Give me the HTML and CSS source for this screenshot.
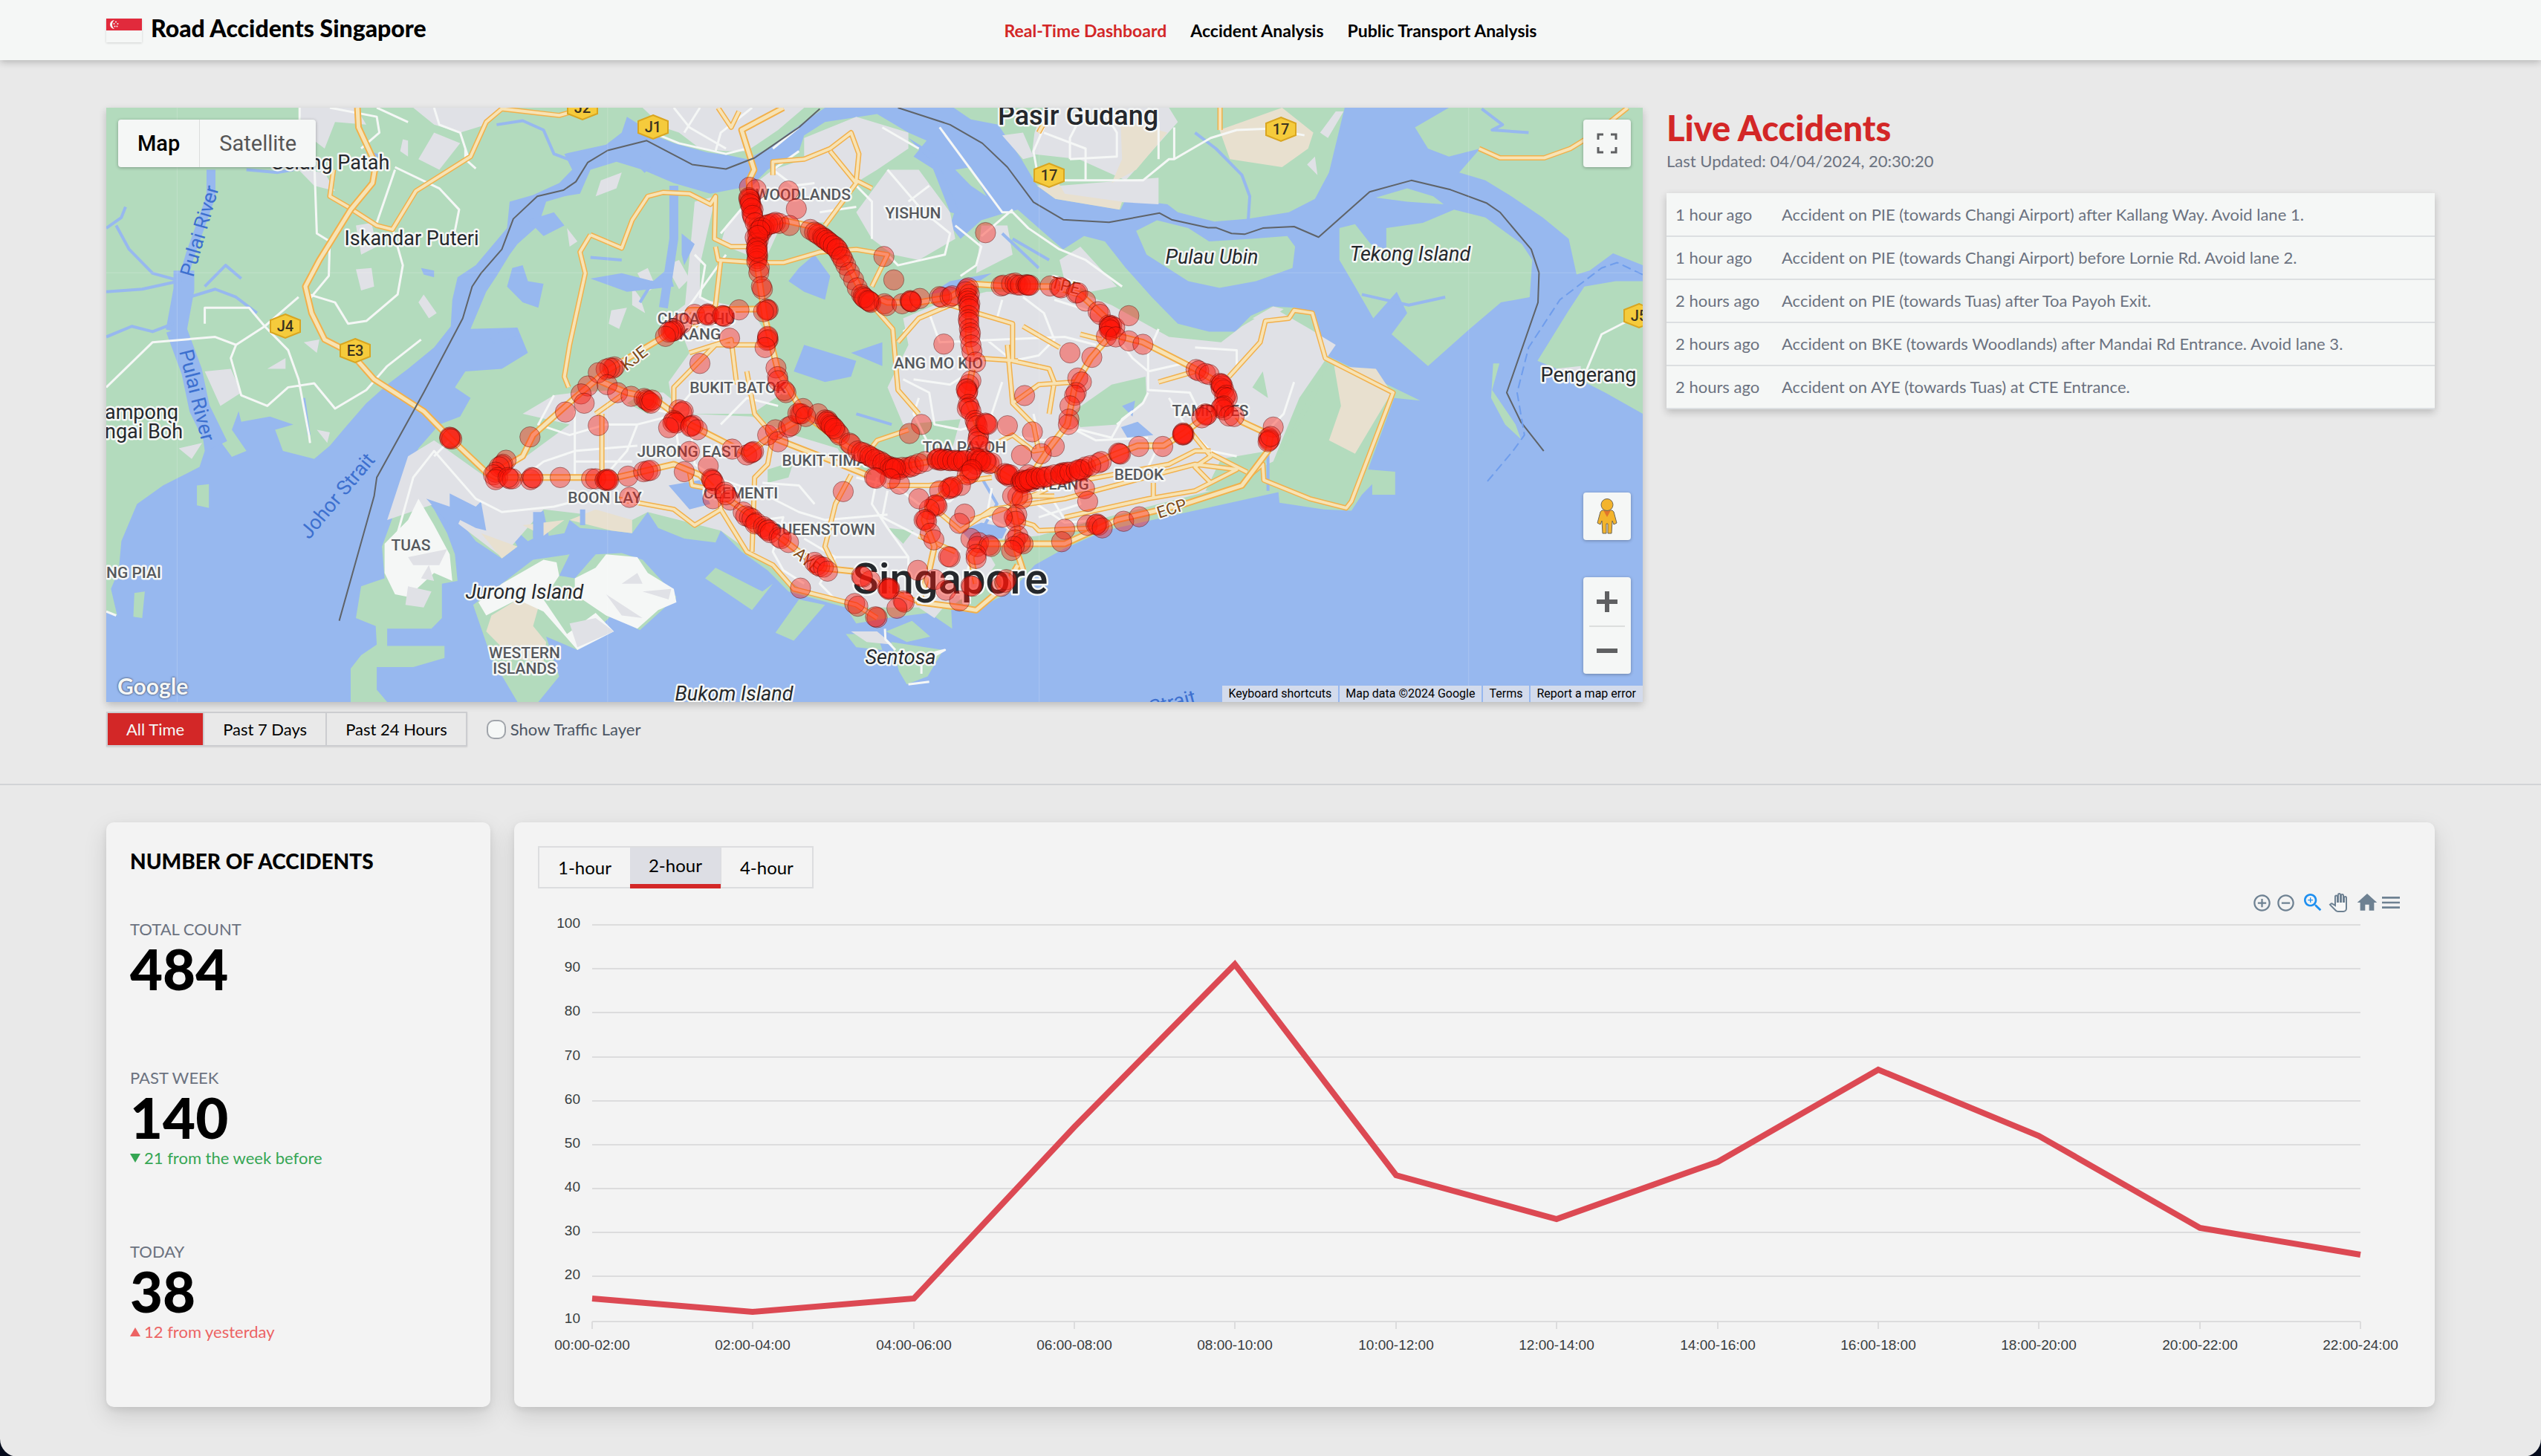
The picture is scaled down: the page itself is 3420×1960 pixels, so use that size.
FILE: index.html
```html
<!DOCTYPE html>
<html lang="en">
<head>
<meta charset="utf-8">
<title>Road Accidents Singapore</title>
<link rel="stylesheet" href="styles.css">
</head>
<body>
<div class="page">
<header class="topbar">
  <a class="brand" href="#">
    <svg class="flag" viewBox="0 0 48 32" aria-hidden="true"><rect width="48" height="32" fill="#f5f7f6"/><rect width="48" height="16" fill="#e12a3c"/><path d="M11 2a6 6 0 1 0 0 12a7.500 7.500 0 0 1 0-12z" fill="#f5f7f6"/><g fill="#f5f7f6"><circle cx="13" cy="4.500" r="1"/><circle cx="10.500" cy="7" r="1"/><circle cx="15.500" cy="7" r="1"/><circle cx="11.500" cy="10.500" r="1"/><circle cx="14.500" cy="10.500" r="1"/></g></svg>
    <span>Road Accidents Singapore</span>
  </a>
  <nav class="nav">
    <a class="current" href="#">Real-Time Dashboard</a>
    <a href="#">Accident Analysis</a>
    <a href="#">Public Transport Analysis</a>
  </nav>
</header>

<main>
<section class="live">
  <div class="map-column">
    <div class="map">
      <svg class="map-canvas" viewBox="0 0 2068 800" preserveAspectRatio="xMidYMid slice" role="img" aria-label="Map of accidents in Singapore">
        <defs>
          <marker id="dot" markerUnits="userSpaceOnUse" markerWidth="60" markerHeight="100" refX="0" refY="0" viewBox="-30 -50 60 100" overflow="visible"><ellipse rx="19.500" ry="38.500" fill="#ff1408" fill-opacity=".4" stroke="#400404" stroke-opacity=".75" stroke-width="1" vector-effect="non-scaling-stroke"/></marker>
          <path id="shield" d="M0-16L20-8V8L0 16L-20 8V-8z" fill="#f5cb3c" stroke="#d9a520" stroke-width="2"/>
        </defs>
        <rect width="2068" height="800" fill="#97b8ef"/>
        <g class="terrain" transform="scale(.7015 .3571) translate(-61 -406)">
          <g class="green">
            <path d="M61 406H1440L1385 480 1330 560 1290 600 1255 585 1215 575 1150 540 1125 520 1060 440 1050 500 1020 545 940 580 955 640 930 690 880 735 835 760 830 860 800 930 770 1000 735 1045 725 1130 722 1230 690 1310 640 1390 600 1450 560 1520 520 1610 490 1680 460 1730 400 1700 385 1620 420 1600 375 1570 320 1590 315 1550 302 1620 330 1700 302 1722 260 1610 240 1560 250 1700 240 1760 170 1830 120 1900 90 2040 85 2150 70 2220 82 2320 61 2305z"/>
            <path d="M1300 700L1330 640 1390 570 1400 510 1440 460 1540 430 1600 500 1635 530 1610 590 1650 640 1665 720 1690 790 1680 850 1700 900 1740 830 1790 800 1810 790 1850 860 1897 940 1937 890 1977 910 2017 1010 2067 1120 2117 1220 2177 1250 2227 1250 2257 1190 2297 1155 2342 1160 2377 1180 2402 1340 2530 1460 2582 1510 2532 1500 2482 1770 2534 1778 2534 1865 2490 1865 2490 1825 2470 1865 2450 1925 2397 1920 2312 1895 2310 1855 2137 1930 1977 2000 1897 2070 1842 2130 1797 2230 1722 2305 1682 2290 1684 2370 1640 2310 1560 2330 1500 2350 1480 2290 1370 2230 1330 2150 1280 2080 1240 2000 1230 2045 1170 2030 1120 1990 1100 1930 1070 2010 1030 2000 970 1990 950 1960 940 2010 910 2020 900 1925 880 1930 880 2030 870 2040 820 1950 850 2060 820 2105 770 2040 730 1940 740 1850 705 1900 680 1860 670 1870 690 1920 715 2010 730 2090 735 2190 705 2200V2330L685 2370H600V2435H710V2480L650 2515H580V2600L600 2646H530V2520L550 2470 580 2430 578 2360 540 2330 550 2210 595 2180 590 2060 620 1900 640 1770 660 1690 700 1600 740 1570 760 1500 730 1460 750 1400 820 1390 870 1330 850 1235 760 1240 790 1100 810 1040 835 960 850 920 890 850 905 760 940 740 970 730 990 640 1040 610 1090 640 1150 690 1220 730z"/>
            <path d="M1687 406H2437L2407 650 2380 750 2330 800 2252 825 2187 835 2117 800 2097 770 2017 750 2007 790 1882 750 1847 700 1817 600 1772 470 1720 450z"/>
            <path d="M2637 406L2607 440 2572 480 2597 560 2637 590 2697 560 2657 650 2707 680 2757 740 2817 820 2867 900 2882 1035 2907 1020 2952 955 3009 1000V406z"/>
            <path d="M3009 1060L2957 1060 2897 1080 2867 1170 2807 1360 2857 1400 2937 1480 3009 1560z"/>
            <path d="M2427 860L2457 845 2487 920 2517 940V860L2587 840 2647 790 2707 820 2777 920 2797 980 2792 1120 2737 1140 2677 1240 2597 1380 2527 1260 2557 1180 2537 1100 2492 1200 2457 1080 2427 980zM2497 745L2557 710 2607 740 2627 770 2557 760z"/>
            <path d="M2037 870L2077 830 2137 860 2177 910 2257 900 2327 890 2342 930 2337 1010 2267 1060 2197 1085 2137 1060 2057 960z"/>
            <path d="M1557 2380L1607 2340 1642 2400 1597 2420zM1567 2420L1667 2450 1637 2550 1597 2580 1582 2530z"/>
            <path d="M2722 1370h12L2720 1470 2765 1600 2775 1655 2745 1600 2718 1500z"/>
            <path d="M820 2200L880 2110 950 2090 930 2170 960 2180 1000 2090 1050 2085 1090 2110 1155 2250 1085 2375 1030 2320 965 2450 905 2400 930 2550 890 2646H850L800 2480 765 2280z"/>
            <path d="M1230 2140L1320 2230 1340 2200 1300 2300 1210 2180zM1390 2260L1440 2280 1380 2415 1345 2385zM235 1830L258 1825V1915L235 1905zM115 2235L135 2230 130 2330 113 2325zM1690 640L1720 630 1750 740 1720 700zM1480 2390L1540 2390 1550 2450 1500 2440z"/>
          </g>
          <g class="urban">
            <path d="M1090 406H1400L1350 490 1290 570 1250 570 1200 560 1160 500 1130 480zM650 406H820L790 470 740 500 690 470zM690 500L740 540 700 640 660 600zM540 850L570 840 580 930 550 960zM540 1015L570 1010 575 1080 550 1095zM670 1110L695 1180 680 1200 660 1140zM430 406H540L560 470 500 460 480 560 440 500zM430 640L480 650 500 720 460 700zM945 860L965 910 950 930zM1010 680L1050 650 1040 710 1000 740zM370 1390L405 1350V1390zM440 1290L470 1280 465 1330zM200 1690L245 1670 225 1730zM465 1620L490 1630 485 1670zM250 1400L300 1390 320 1480 280 1530zM630 525L640 530V590L625 570z"/>
            <path d="M640 1720L690 1660 790 1800 860 1730 950 1600 860 1560 920 1490 960 1480 1040 1470 1130 1480 1180 1560 1300 1570 1380 1640 1480 1700 1560 1790 1680 1720 1700 1580 1590 1600 1560 1460 1600 1300 1590 1200 1650 1150 1750 1100 1800 1100 1900 1080 1990 1150 2100 1270 2200 1290 2240 1230 2300 1160 2370 1240 2420 1300 2350 1500 2300 1740 2180 1850 1940 1970 1850 2020 1790 2070 1740 2200 1680 2290 1500 2290 1400 2230 1240 2000 1100 1930 1070 1960 900 1920 820 2100 740 1980 690 1900 600 1960z"/>
            <path d="M1150 1180L1190 1120 1300 1170 1340 1300 1360 1480 1300 1560 1150 1560 1140 1440 1180 1330zM1290 760L1250 850 1240 920 1290 960 1330 960 1360 830 1450 840 1490 700 1540 640 1600 560V500L1500 440 1400 520V600L1340 640 1300 700zM1560 640L1620 640 1680 800 1690 900 1620 980 1570 960 1530 900 1500 800zM1190 760L1230 740 1200 1000V1150L1170 1180zM1740 850L1790 850 1800 960 1730 1030zM1890 980L1930 930 2000 1080 1950 1100 1900 1060z"/>
            <path d="M1860 406H2100L2117 460 2017 680 1927 600 1837 580 1842 500zM1890 700L2080 670V770L1900 750zM2390 500L2420 420H2435L2405 520zM2250 530L2290 500 2290 570zM2365 620L2380 590 2385 660zM1780 510L1820 500 1840 590 1820 600z"/>
            <path d="M1490 2380L1540 2380 1570 2430 1520 2420zM2260 1200L2300 1155 2320 1165 2290 1210zM2840 1390L2890 1380 2890 1410zM1620 2290L1680 2260 1650 2330zM1080 1030L1100 1010 1115 1080 1100 1100zM1135 1000L1160 980 1180 1050 1160 1090zM1070 1080L1085 1120 1095 1180 1070 1150zM1030 1170L1060 1160 1045 1240 1025 1220z"/>
          </g>
          <g class="sand">
            <path d="M2197 490L2317 406 2377 500 2367 560 2317 630 2217 600zM2007 450L2097 500 2037 640 1990 690 2010 600zM1847 700L1887 685 1900 730 2010 760 2005 790 1882 750zM2417 1380L2497 1390 2527 1480 2457 1710 2407 1660 2430 1530zM950 1960L1000 1920 1070 1960V2010L1030 2000zM860 1980L940 1960 900 2020zM780 2010L850 2060 820 2105zM800 2320L850 2260 890 2290 880 2360 905 2420 900 2500 840 2480 790 2380z"/>
          </g>
          <g class="green">
            <path d="M1990 1450L2055 1420 2057 1500 2000 1600 1930 1610 1910 1560zM1450 1640L1500 1660 1530 1790 1490 1780zM1330 1770L1380 1740 1370 1800 1330 1820zM1560 1990L1610 2000 1590 2050zM2170 1850L2200 1730 2290 1700 2280 1850zM2260 1460L2280 1400 2290 1500zM2380 1500L2410 1340 2300 1760zM1740 2040L1850 2020 1860 2090 1797 2230zM1100 1470L1130 1500 1100 1560 1060 1520z"/>
          </g>
          <g class="white">
            <path d="M660 1880L690 1980 720 2090 725 2190 690 2160 640 2250 615 2240 595 2160V2050L640 1960zM820 2200L900 2110 925 2120 930 2170 900 2260 945 2390 1000 2310 1035 2380 965 2450 900 2305 850 2260 790 2320 775 2270zM1000 2140L1020 2090 1080 2100 1100 2160 1150 2220 1155 2270 1120 2300 1080 2370 1020 2320 960 2240V2180z"/>
          </g>
          <g class="urban">
            <path d="M640 2100L715 2070 700 2130 650 2130zM680 2130L690 2190 665 2180zM640 2210L685 2230 670 2290 635 2280zM1050 2200L1080 2160 1090 2200zM1090 2230L1145 2220 1140 2260zM1020 2240L1090 2330 1050 2320zM950 2350L1000 2330 1035 2380 965 2440z"/>
          </g>
          <g class="water">
            <path d="M840 1010L860 1000 870 1060 900 1070 890 1160 860 1140 830 1080zM870 830L920 800 940 850 900 890zM1390 1010L1420 960 1450 1040 1440 1130 1400 1100 1370 1060zM1400 1300L1500 1360 1490 1420 1440 1440 1380 1400zM1490 1330L1550 1290 1550 1380zM1600 520L1640 600 1680 800 1700 810 1650 580zM2008 1610L2040 1590 2070 1640 2020 1650zM2010 1530L2035 1510 2030 1570zM1640 1110L1680 1060 1760 1030 1720 1080zM990 1050L1050 1030 1110 1060 1140 1010 1150 1080 1060 1100zM1165 880L1190 920 1170 1000 1165 960zM665 1010l25 10v25l-20-10z"/>
            <path d="M675 1880L720 1910 720 1860 770 1910 780 1890 790 2000 770 1990 740 1960 730 2000zM880 1930h20v95h-20zM970 1920h10v60h-10zM1140 1830L1200 1810 1220 1900 1180 1920zM1700 2000L1740 1970 1790 1990 1780 2030 1720 2040z"/>
          </g>
          <g class="river">
            <path class="river-wide" d="M195 1250L210 1090V1020M195 1240L225 1400 240 1540 275 1680"/>
            <path class="river-mid" d="M210 1040L222 960 262 740V640M1130 1160L1150 900 1150 700M1100 640L1080 600M800 1280L850 1250"/>
            <path d="M61 860L90 820 98 780M205 1060L150 1030 105 940 80 850M61 1100L130 1090 200 1060M61 1270L110 1230 150 1250 190 1220M330 640L390 650 420 640M810 470L860 455 900 490 920 580 960 610M250 1080L290 1000 320 1050M220 1120L270 1090 310 1120 350 1180M990 970L1050 980M1085 1140L1110 1060M2150 500L2190 560 2240 660 2255 740 2252 830M2700 410L2740 470 2720 490 2790 500M1780 880L1850 1010M1800 900L1870 980M2470 1110L2560 1150 2630 1120M2290 1700V1850M1740 1800L1770 1900 1740 2000M440 1500L450 1640M1500 1560L1568 1600M560 570L600 600"/>
          </g>
          <g class="minor">
            <path d="M432 406V560L460 600 465 880 490 910M580 406L640 460M750 560L755 590M490 406L580 440 585 500 550 560M690 406L700 470 740 500 750 560 750 600 770 635M615 630L700 710 738 790 730 870M615 640L580 840M610 860L630 1000 620 1110 560 1210 525 1220 500 1140 450 1110M490 900L488 1040 450 1130M61 1460L150 1290 270 1270 310 1300M310 1300L365 1230 430 1120M250 1220V1160H335L365 1230 410 1320 430 1430 450 1640 452 1670M310 1300L300 1350 320 1490 370 1530 410 1460 460 1445 500 1540 560 1470 600 1380 665 1280"/>
            <path d="M1110 500L1160 540 1250 580 1290 560M1150 406L1180 480 1250 560M1200 406L1170 500M1300 406L1240 500 1230 570M1390 480L1340 560M1660 480L1780 800 1800 800 1830 860 1890 940 1940 980 2010 1080M1390 570L1340 640 1380 700 1420 690M1500 700L1530 760 1530 900M1560 640L1630 800 1680 880 1670 960 1580 1000 1560 960M1640 700L1600 760M1550 480L1620 560M1690 850L1740 930 1730 1000 1700 1040M1740 890L1800 790M1260 1180L1200 1120 1210 1000 1190 960M1300 740L1240 880M1250 960L1170 1180"/>
            <path d="M1860 500L1940 560 1940 680 2050 680 2100 600 2110 600 2180 520 2230 490 2290 485 2360 510M1860 480L1840 570 1850 680 2040 680M1910 600L2000 590V500L1970 406M1910 600V520L1940 406M2080 600V460L2060 406M2110 600V480"/>
            <path d="M620 2010L650 1800 690 1700 770 1880 820 1930 920 1910 980 1880 1060 1700 1080 1600 1180 1550M690 1720L720 1660 790 1780M860 1800L900 1740 960 1700 1080 1680M960 1740H1070M960 1800V1550M920 1490L890 1600 950 1640 1020 1600 1080 1600M1080 1530L1150 1560 1160 1700M1180 1560L1190 1750 1230 1800 1320 1860 1390 1930 1440 1960 1560 1940M1320 1820L1390 1830 1420 1900M1240 1600L1290 1500 1350 1530M1150 1560L1200 1440 1300 1440M1320 1960L1360 1950 1340 2080 1360 2150 1400 2200M1400 2030L1460 2100 1600 2100M1460 2100L1430 2200 1460 2260M1540 1800L1530 1900 1560 1990 1600 2100 1600 2300"/>
            <path d="M1500 1800L1580 1840 1620 1900 1680 1890 1700 1850M1560 1850L1550 1950 1620 2020 1700 2080M1590 1430L1640 1480 1650 1600 1700 1620 1740 1600M1590 1250L1640 1180 1660 1290 1780 1280 1900 1270 1960 1300M1610 1430L1680 1450 1720 1400M1620 1500L1610 1560 1640 1680M1750 1280L1800 1360 1850 1340 1880 1280 1860 1180 1820 1120M1770 1200L1780 1130M1880 1130L1960 1180M1780 1440L1760 1560 1780 1640 1860 1660 1930 1620 1990 1650 2010 1580 2030 1550M1840 1560L1850 1640M1900 1600L1960 1660 2060 1650M2060 1420V1470L2140 1480 2160 1560M2060 1480L2050 1520 2000 1600M2080 1240L2060 1330 2060 1420M2150 1310L2230 1320 2230 1400M2060 1400L2150 1360M2000 1270L2030 1350 2060 1400M2100 1500L2130 1600 2180 1700 2230 1720M2080 1680L2060 1760 2080 1800M2340 1440L2320 1560 2290 1620M1850 1950L1930 1900 1920 1850M1830 1880L1900 1970 1960 1960M1760 1840L1750 1950 1800 2000M1870 1860L1900 1960"/>
            <path d="M2900 1400L2930 1260 2990 1200M1555 2370L1556 2410 1575 2450M1625 2540V2500L1670 2450 1650 2460M1640 2570L1600 2580M1430 800L1500 780M1690 2100L1660 2200 1690 2250M1720 2100L1700 2260M61 2305L80 2320"/>
          </g>
          <g class="road-case thin"><use href="#arterials"/></g>
          <g class="road-fill thin"><g id="arterials">
            <path d="M497 640L490 740 525 780 580 850 610 865 655 720 760 590 790 460 820 410 930 435 975 410M1235 406L1260 480 1275 420M990 885L1050 935 1070 830 1100 740 1130 725 1180 730 1220 770 1230 740 1228 900 1260 930 1290 930M990 885L970 950 980 1030 950 1300 940 1420 948 1460M1230 930L1235 980 1310 990 1360 990 1430 950 1500 940 1560 960 1530 1080M1240 980L1230 1150 1180 1250M1340 660V610L1400 600 1450 560 1490 500 1505 580 1500 680 1530 710M1450 570L1500 690 1440 850M1530 1150L1570 1240 1580 1470 1620 1560M1580 1290L1620 1200 1680 1150 1800 1220V1360L1870 1390 1880 1440 1870 1560M1730 1350L1810 1360M1790 1300L1800 1520 1840 1600 1850 1700M1800 1520L1850 1450 1920 1440M1930 1260L1970 1280"/>
            <path d="M1000 1560L1050 1490M1012 1560V1800M1180 1330L1260 1280 1270 1440 1300 1490M1150 1530L1150 1460 1230 1300 1340 1300M1290 1400L1305 1560 1340 1640 1330 1750 1305 1800 1300 2080M1180 1780L1185 1830 1240 1850M1240 1850L1240 1920 1190 1980 1150 1920 1040 1880M1240 1920L1290 2080 1340 2130 1380 2220 1500 2280 1540 2330M1490 1790L1460 1900 1440 2060 1460 2140M1500 1760L1540 1660 1600 1620M1560 1830L1640 1830 1760 1800M1640 1900L1700 2000 1760 1920 1900 1880 2150 1750 2230 1770 2150 1850 2060 1880 1900 1950M1880 1830L2100 1750 2150 1700 2180 1700M2130 1600L2180 1720 2150 1760 2180 1820M2070 1820V1880M1880 1870L1830 1870 1800 1900M1790 1950L1840 1980 1850 2000 1960 1990M1560 2220L1620 2270M1740 1700L1800 1640 1840 1700 1870 1690M1690 2080L1620 2020M1870 1840L1780 1920 1720 1960"/>
            <path d="M2250 1800L2280 1750 2282 1810 2370 1880 2440 1915 2450 1890 2530 1480 2400 1350 2375 1180 2340 1170 2330 1200 2285 1210 2275 1290 2215 1420M2180 1710L2250 1780M2198 406V490M1870 430L1850 500M2695 560L2735 595H2820L2870 560 2920 500 2980 406M2080 1440L2150 1400M1820 1230L1890 1310"/>
          </g></g>
          <g class="road-case"><use href="#highways"/></g>
          <g class="road-fill"><g id="highways">
            <path d="M543 406L545 480 578 620 572 690 530 790 470 980 443 1080 455 1180 480 1280 530 1330 575 1430 670 1550 720 1650 790 1780 810 1800H1040L1150 1750 1200 1790 1230 1850 1290 1930 1370 2050 1430 2140 1500 2155 1560 2220"/>
            <path d="M1360 406L1280 490 1304 640 1294 680 1300 820 1310 1000 1325 1200 1350 1400 1400 1560 1480 1680 1560 1770 1640 1740H1740L1800 1810 1860 1800 1940 1760 2000 1710 2040 1680H2090L2130 1630 2170 1570 2215 1530"/>
            <path d="M1310 1165L1180 1170 1130 1270 1020 1400 960 1500 880 1640 860 1720 800 1790M1000 1430L1060 1480 1110 1500 1180 1600 1290 1710 1340 1640 1400 1570M1340 1650L1470 1750 1520 1790"/>
            <path d="M1300 860L1360 830 1430 860 1480 980 1510 1100 1560 1140 1620 1140 1680 1120 1720 1070 1800 1080H1880L1930 1110 1980 1200 1990 1260 2050 1290 2150 1390 2200 1450 2215 1530 2240 1590 2295 1640 2290 1700 2240 1830 2130 1900 2000 1960 1900 2050H1740L1720 2100 1730 2200M1985 1270L1950 1350 1920 1450 1905 1600 1870 1690 1800 1900 1810 2000 1805 2060 1820 2150"/>
            <path d="M1715 1080V1300L1725 1370 1712 1500 1740 1640 1735 1730 1700 1800 1680 1840 1640 1900 1630 1960 1650 2060 1640 2150 1620 2270 1700 2290 1730 2300 1790 2200 1810 2130"/>
          </g></g>
          <path class="border" d="M1430 410L1390 480 1305 595 1250 637 1185 620 1098 530 1023 567 985 612 962 685 938 717 888 740 842 825 820 940 780 1030 763 1080 745 1200 670 1480 580 1800 575 1870 508 2340M1580 406L1680 470 1742 540 1790 630 1840 762 1897 828 1985 838 2082 803 2105 828 2175 858H2190L2220 880 2245 883 2280 860 2340 854 2387 894 2485 723 2565 680 2640 715 2710 766 2735 800 2795 940 2810 1028 2808 1140 2748 1480 2775 1590 2819 1700"/>
          <path class="ferry" d="M3009 1035L2960 990 2930 1010 2850 1130 2790 1310 2768 1480 2782 1640 2760 1700 2706 1826"/>
          <path class="tile" d="M197 406V2646M1023 406V2646M1851 406V2646M2675 406V2646M61 1028H3009"/>
        </g>
        <g class="labels">
          <text x="301" y="83">Gelang Patah</text>
          <text x="411" y="185">Iskandar Puteri</text>
          <text class="city" x="1308" y="23">Pasir Gudang</text>
          <text x="1995" y="369">Pengerang</text>
          <text class="start" x="-2" y="419">ampong</text>
          <text class="start" x="-2" y="445">ngai Boh</text>
          <g class="island">
            <text x="1488" y="210">Pulau Ubin</text><text x="1755" y="206">Tekong Island</text><text x="563" y="661">Jurong Island</text><text x="845" y="798">Bukom Island</text><text x="1069" y="749">Sentosa</text>
          </g>
          <g class="district">
            <text x="938" y="124">WOODLANDS</text><text x="1086" y="149">YISHUN</text><text x="1120" y="351">ANG MO KIO</text><text x="1486" y="415">TAMPINES</text><text x="794" y="291">CHOA CHU</text><text x="799" y="312">KANG</text><text x="850" y="384">BUKIT BATOK</text><text x="784" y="470">JURONG EAST</text><text x="974" y="482">BUKIT TIMAH</text><text x="1155" y="464">TOA PAYOH</text><text x="671" y="532">BOON LAY</text><text x="854" y="526">CLEMENTI</text><text x="1276" y="514">GEYLANG</text><text x="1390" y="501">BEDOK</text><text x="965" y="575">QUEENSTOWN</text><text x="410" y="596">TUAS</text><text class="start" x="0" y="633">NG PIAI</text><text x="563" y="741">WESTERN</text><text x="563" y="762">ISLANDS</text>
          </g>
          <g class="sea">
            <text transform="translate(273 582) rotate(-50)">Johor Strait</text><text transform="translate(117 229) rotate(-74)">Pulai River</text><text transform="translate(98 328) rotate(76)">Pulai River</text><text transform="translate(1386 822) rotate(-14)">e Strait</text>
          </g>
          <g class="route">
            <text transform="translate(700 355) rotate(-38)">KJE</text><text transform="translate(924 602) rotate(42)">AYE</text><text transform="translate(1417 553) rotate(-18)">ECP</text><text transform="translate(1270 242) rotate(14)">TPE</text>
          </g>
          <text class="capital" x="1136" y="654">Singapore</text>
        </g>
        <g class="shields">
          <use href="#shield" x="641" y="0"/><use href="#shield" x="736" y="26"/><use href="#shield" x="241" y="294"/><use href="#shield" x="335" y="327"/><use href="#shield" x="1581" y="29"/><use href="#shield" x="1269" y="91"/><use href="#shield" x="2063" y="280"/>
          <text x="641" y="7">J2</text><text x="736" y="33">J1</text><text x="241" y="301">J4</text><text x="335" y="334">E3</text><text x="1581" y="36">17</text><text x="1269" y="98">17</text><text x="2063" y="287">J5</text>
        </g>
        <g class="accidents" transform="scale(.7015 .3571) translate(-61 -406)">
          <path d="M1295 706L1308 715 1370 720 1385 787 1294 745 1296 752 1297 762 1298 772 1302 790 1300 805 1302 820 1310 860 1312 870 1325 850 1335 845 1345 838 1352 842 1372 850 1322 862 1318 875 1314 885 1306 895 1312 905 1309 918 1310 930 1308 942 1310 955 1311 965 1310 975 1309 985 1314 1010 1313 1028 1320 1090 1318 1080 1328 1165 1331 1168 1329 1170 1322 1175 1330 1272 1331 1280 1329 1283 1330 1268 1325 1310 1346 1387 1349 1420 1350 1435 1365 1480 1362 1472"/>
          <path d="M1294 750L1296 768 1299 785 1301 812 1306 840 1318 858 1330 848 1340 842 1315 868 1311 888 1309 935 1310 948"/>
          <path d="M1412 865L1420 875 1428 885 1435 893 1440 900 1446 910 1452 920 1460 930 1465 942 1468 955 1475 980 1480 1000 1487 1027 1495 1055 1502 1085 1510 1110 1513 1118 1517 1125 1522 1132 1526 1137 1528 1140 1553 967 1572 1055 1554 1145 1558 1152 1588 1145 1603 1135 1606 1138 1604 1133 1622 1125 1660 1118 1664 1121 1680 1120 1684 1115 1712 1090 1715 1085 1710 1100"/>
          <path d="M1425 880L1437 898 1443 906 1449 915 1456 926 1463 938 1472 968 1515 1122 1524 1134 1605 1137"/>
          <path d="M1748 877L1717 1110 1715 1125 1714 1135 1718 1145 1716 1155 1717 1165 1716 1190 1715 1205 1716 1215 1717 1240 1719 1255 1718 1270 1720 1300 1722 1325 1729 1365 1720 1435 1716 1450 1712 1465 1714 1475 1713 1480 1711 1468 1715 1525 1717 1535 1713 1540 1720 1550 1728 1585 1730 1595 1732 1605 1735 1640 1734 1650 1733 1665 1738 1680 1748 1595 1752 1600 1750 1598 1668 1297"/>
          <path d="M1778 1078L1782 1075 1798 1070 1805 1067 1809 1074 1815 1075 1826 1073 1829 1074 1833 1075 1830 1076 1872 1078 1890 1082 1893 1085 1922 1105 1925 1103 1940 1135 1964 1175 1968 1185 1985 1225 1987 1230 1990 1228 1996 1235 1985 1240 1988 1245 1986 1232 1980 1268 1998 1270 2023 1190 2023 1285 2050 1298 1910 1330 1952 1347 1925 1425 1932 1440 1922 1480 1919 1490 1910 1530 1908 1580 1907 1600 1823 1491 1838 1628 1790 1605"/>
          <path d="M2152 1393L2157 1398 2170 1408 2177 1412 2198 1445 2200 1450 2203 1455 2200 1463 2205 1470 2201 1448 2210 1490 2207 1497 2212 1500 2205 1530 2200 1538 2205 1545 2202 1534 2215 1568 2225 1570 2170 1560 2173 1563 2171 1565 2163 1575 2300 1610 2291 1650 2293 1657 2292 1661 2290 1665 2295 1645M2127 1640V1632L2129 1637"/>
          <path d="M1190 1185L1215 1183 1217 1188 1213 1187 1245 1190 1247 1193 1243 1190 1275 1168 1165 1220 1150 1240 1152 1245 1148 1248 1145 1250 1140 1252 1134 1268 1257 1275 1200 1370 1036 1383 1033 1388 1027 1387 1020 1392 1005 1405 985 1455 972 1485 978 1520 942 1553 1022 1450 1042 1480 1068 1494 1093 1502 1097 1507 1100 1511 1103 1515 1106 1520 1108 1508 1005 1604 874 1647"/>
          <path d="M1160 1545L1168 1550 1165 1555 1150 1585 1148 1593 1152 1590 1155 1595 1140 1612 1183 1605 1187 1603 1182 1608 1195 1620 1180 1702 1216 1757 1262 1693 1290 1715 1298 1708 1303 1702 1300 1705 1330 1640 1345 1620 1350 1665 1370 1610 1375 1605 1392 1560 1395 1560 1388 1558 1398 1540 1427 1560 1403 1570"/>
          <path d="M1440 1583L1445 1585 1447 1592 1450 1600 1455 1608 1460 1620 1465 1632 1468 1640 1487 1670 1490 1675 1503 1700 1515 1708 1522 1715 1530 1725 1540 1735 1547 1740 1555 1752 1562 1757 1568 1765 1572 1763 1578 1768 1583 1770 1588 1762 1598 1762 1605 1760 1610 1755 1620 1748 1632 1740 1655 1733 1659 1728 1662 1736 1670 1732 1680 1737 1690 1735 1697 1737 1702 1739 1710 1737 1728 1725 1733 1730 1736 1735 1740 1730 1730 1750 1750 1742 1755 1748 1760 1745 1785 1785 1788 1790 1792 1795 1795 1790"/>
          <path d="M1443 1590L1452 1605 1458 1615 1510 1705 1526 1720 1536 1731 1551 1746 1565 1762 1570 1768 1575 1764 1656 1730 1664 1733 1675 1735 1685 1736 1694 1738 1706 1736 1732 1728 1738 1738 1748 1738 1790 1788"/>
          <path d="M1720 1775L1718 1785 1713 1790 1722 1770 1700 1830 1680 1838 1683 1840 1677 1843 1685 1835 1660 1850 1650 1905 1655 1908 1653 1903 1640 1920 1633 1958 1630 1960 1635 1965 1642 2010 1649 2035 1620 1880 1583 1825 1565 1805 1535 1800 1538 1803 1475 1853 1625 1600 1602 1634 1708 1938 1698 1973 1720 2030 1735 2045 1732 2060 1755 2055 1758 2060 1730 2090 1730 2105 1680 2100 1677 2098 1618 2150"/>
          <path d="M1816 1818L1818 1810 1822 1820 1825 1815 1820 1822 1828 1810 1835 1805 1840 1798 1830 1790 1835 1815 1850 1805 1860 1800 1870 1795 1893 1785 1897 1782 1900 1785 1895 1790 1905 1780 1930 1772 1935 1768 1932 1775 1940 1760 1965 1745 1970 1740 2003 1708 2007 1712 2005 1710 2042 1683 2088 1683 2127 1635 2126 1638 1880 1683 1855 1710 1817 1716 1938 1842 1944 1890 1810 1870 1800 1870 1818 1880"/>
          <path d="M1819 1816L1824 1812 1832 1808 1845 1802 1855 1798 1865 1798 1880 1790 1892 1788 1910 1780 1922 1775 1928 1770 1950 1755"/>
          <path d="M1808 1940L1803 1950 1806 1965 1780 1950 1810 2020 1805 2035 1820 2050 1815 2045 1803 2060 1798 2075 1900 1995 1894 2042 1943 1980 1962 1975 1965 1980 1960 1978 1972 1990 2013 1965 2043 1948 1560 2216 1563 2220 1564 2218 1562 2222 1590 2265 1592 2270 1578 2293 1540 2328 1537 2325 1497 2275 1503 2285 1527 2190 1510 2172 1512 2175 1650 2185 1672 2225 1720 2208 1722 2210 1698 2265 1778 2210 1788 2185 1785 2195"/>
          <path d="M722 1650L720 1648 724 1655 720 1653 828 1735 822 1750 820 1755 815 1760 808 1780 804 1790 812 1800 808 1808 835 1805 840 1805 832 1800 875 1808 878 1800 880 1802 932 1800 992 1805 1000 1805 1020 1808 1022 1812 1018 1810 1023 1806 1025 1810 1062 1795 1092 1778 1100 1775 1105 1773 1065 1875 1170 1778 1222 1805 1225 1812 1223 1810 1228 1825 1225 1880 1248 1855 1258 1885 1250 1865"/>
          <path d="M1283 1930L1288 1945 1295 1950 1300 1955 1308 1970 1306 1975 1322 1985 1327 1993 1332 1997 1330 2000 1335 2008 1352 2025 1356 2030 1370 2045 1420 2120 1425 2130 1430 2135 1437 2138 1445 2153 1393 2217"/>
        </g>
      </svg>
      <div class="map-type"><button class="selected" type="button">Map</button><button type="button">Satellite</button></div>
      <div class="map-tools">
        <button class="tool fullscreen" type="button" aria-label="Toggle fullscreen view"><svg viewBox="0 0 28 28"><path d="M2 9V2h7M19 2h7v7M26 19v7h-7M9 26H2v-7" fill="none" stroke="#5f6062" stroke-width="3"/></svg></button>
        <button class="tool" type="button" aria-label="Drag Pegman onto the map to open Street View"><svg class="pegman" viewBox="0 0 28 48"><path d="M7 16h14l2 2 4 15-4 2-2-5-1 17h-5V34h-2v13H8L7 30l-2 5-4-2 4-15z" fill="#f3b42c" stroke="#6b6557"/><path d="M9 16h10l-5 9z" fill="#e1762a"/><circle cx="14" cy="8.500" r="8" fill="#f3b42c" stroke="#6b6557"/></svg></button>
        <div class="zoomer">
          <button type="button" aria-label="Zoom in"><svg viewBox="0 0 28 28"><path d="M0 14h28M14 0v28" stroke="#5f6062" stroke-width="6"/></svg></button>
          <button type="button" aria-label="Zoom out"><svg viewBox="0 0 28 28"><path d="M0 14h28" stroke="#5f6062" stroke-width="6"/></svg></button>
        </div>
      </div>
      <span class="google">Google</span>
      <div class="attribution"><button type="button">Keyboard shortcuts</button><span>Map data ©2024 Google</span><a href="#">Terms</a><a href="#">Report a map error</a></div>
    </div>
    <div class="filters">
      <div class="range"><button class="selected" type="button">All Time</button><button type="button">Past 7 Days</button><button type="button">Past 24 Hours</button></div>
      <label class="traffic"><input type="checkbox">Show Traffic Layer</label>
    </div>
  </div>
  <div class="feed">
    <h1>Live Accidents</h1>
    <p>Last Updated: 04/04/2024, 20:30:20</p>
    <table>
      <tbody>
        <tr><td>1 hour ago</td><td>Accident on PIE (towards Changi Airport) after Kallang Way. Avoid lane 1.</td></tr>
        <tr><td>1 hour ago</td><td>Accident on PIE (towards Changi Airport) before Lornie Rd. Avoid lane 2.</td></tr>
        <tr><td>2 hours ago</td><td>Accident on PIE (towards Tuas) after Toa Payoh Exit.</td></tr>
        <tr><td>2 hours ago</td><td>Accident on BKE (towards Woodlands) after Mandai Rd Entrance. Avoid lane 3.</td></tr>
        <tr><td>2 hours ago</td><td>Accident on AYE (towards Tuas) at CTE Entrance.</td></tr>
      </tbody>
    </table>
  </div>
</section>

<section class="stats">
  <div class="card counts">
    <h2>NUMBER OF ACCIDENTS</h2>
    <div class="count"><span class="count-label">TOTAL COUNT</span><strong>484</strong></div>
    <div class="count"><span class="count-label">PAST WEEK</span><strong>140</strong><span class="delta down"><svg viewBox="0 0 14 12"><path d="M0 0h14L7 12z"/></svg>21 from the week before</span></div>
    <div class="count"><span class="count-label">TODAY</span><strong>38</strong><span class="delta up"><svg viewBox="0 0 14 12"><path d="M0 12h14L7 0z"/></svg>12 from yesterday</span></div>
  </div>
  <div class="card chart-card">
    <div class="tabs"><button type="button">1-hour</button><button class="selected" type="button">2-hour</button><button type="button">4-hour</button></div>
    <div class="toolbar">
      <button type="button" aria-label="Zoom in"><svg class="round" viewBox="0 0 24 24"><path d="M13 7h-2v4H7v2h4v4h2v-4h4v-2h-4V7zm-1-5C6.480 2 2 6.480 2 12s4.480 10 10 10 10-4.480 10-10S17.520 2 12 2zm0 18c-4.410 0-8-3.590-8-8s3.590-8 8-8 8 3.590 8 8-3.590 8-8 8z"/></svg></button>
      <button type="button" aria-label="Zoom out"><svg class="round" viewBox="0 0 24 24"><path d="M7 11v2h10v-2H7zm5-9C6.480 2 2 6.480 2 12s4.480 10 10 10 10-4.480 10-10S17.520 2 12 2zm0 18c-4.410 0-8-3.590-8-8s3.590-8 8-8 8 3.590 8 8-3.590 8-8 8z"/></svg></button>
      <button class="zoom-select" type="button" aria-label="Selection zoom"><svg viewBox="0 0 24 24"><path d="M15.500 14h-.79l-.28-.27C15.410 12.590 16 11.110 16 9.500 16 5.910 13.090 3 9.500 3S3 5.910 3 9.500 5.910 16 9.500 16c1.610 0 3.090-.59 4.230-1.570l.27.28v.79l5 4.990L20.490 19l-4.990-5zm-6 0C7.010 14 5 11.990 5 9.500S7.010 5 9.500 5 14 7.010 14 9.500 11.990 14 9.500 14z"/><path d="M12 10h-2v2H9v-2H7V9h2V7h1v2h2v1z"/></svg></button>
      <button class="pan" type="button" aria-label="Panning"><svg viewBox="0 0 24 24"><path d="M23 5.500V20c0 2.200-1.800 4-4 4h-7.300c-1.080 0-2.100-.43-2.850-1.190L1 14.830s1.260-1.230 1.300-1.250c.22-.19.49-.29.79-.29.22 0 .42.06.6.16.04.01 4.310 2.460 4.310 2.460V4c0-.83.67-1.500 1.500-1.500S11 3.170 11 4v7h1V1.500c0-.83.67-1.500 1.500-1.500S15 .67 15 1.500V11h1V2.500c0-.83.67-1.500 1.500-1.500s1.500.67 1.500 1.500V11h1V5.500c0-.83.67-1.500 1.500-1.500s1.500.67 1.500 1.500z"/></svg></button>
      <button class="home" type="button" aria-label="Reset zoom"><svg viewBox="0 0 24 24"><path d="M10 20v-6h4v6h5v-8h3L12 3 2 12h3v8z"/></svg></button>
      <button type="button" aria-label="Menu"><svg viewBox="0 0 24 24"><path d="M3 18h18v-2H3v2zm0-5h18v-2H3v2zm0-7v2h18V6H3z"/></svg></button>
    </div>
    <svg class="chart" viewBox="0 0 2521 604" role="img" aria-label="Accidents by time of day">
      <path class="grid" d="M73 14H2453M73 73H2453M73 132H2453M73 192H2453M73 251H2453M73 310H2453M73 369H2453M73 428H2453M73 487H2453"/>
      <path class="axis" d="M73 548H2453M73 548V558M289 548V558M506 548V558M722 548V558M938 548V558M1155 548V558M1371 548V558M1588 548V558M1804 548V558M2020 548V558M2237 548V558M2453 548V558"/>
      <g class="y-labels"><text x="57" y="18">100</text><text x="57" y="77">90</text><text x="57" y="136">80</text><text x="57" y="196">70</text><text x="57" y="255">60</text><text x="57" y="314">50</text><text x="57" y="373">40</text><text x="57" y="432">30</text><text x="57" y="491">20</text><text x="57" y="550">10</text></g>
      <g class="x-labels"><text x="73" y="586">00:00-02:00</text><text x="289" y="586">02:00-04:00</text><text x="506" y="586">04:00-06:00</text><text x="722" y="586">06:00-08:00</text><text x="938" y="586">08:00-10:00</text><text x="1155" y="586">10:00-12:00</text><text x="1371" y="586">12:00-14:00</text><text x="1588" y="586">14:00-16:00</text><text x="1804" y="586">16:00-18:00</text><text x="2020" y="586">18:00-20:00</text><text x="2237" y="586">20:00-22:00</text><text x="2453" y="586">22:00-24:00</text></g>
      <polyline class="series" points="73,517 289,535 506,517 722,286 938,67 1155,351 1371,410 1588,333 1804,209 2020,298 2237,422 2453,458"/>
    </svg>
  </div>
</section>
</main>
</div>
</body>
</html>
```
FILE: styles.css
```css
* { box-sizing: border-box; }
html { background: #050b1c; }
body { margin: 0; font-family: Lato, "Liberation Sans", sans-serif; font-size: 22px; line-height: 32px; color: #000; }
button { margin: 0; padding: 0; border: 0; background: none; font: inherit; color: inherit; cursor: pointer; }
a { color: inherit; text-decoration: none; }
svg { display: block; }
h1, h2, p { margin: 0; }
.page { min-height: 100vh; background: #e9e9e9; border-radius: 0 0 24px 24px; overflow: hidden; }

.topbar { display: grid; grid-template-columns: 1fr auto 1fr; align-items: center; height: 81px; padding: 0 143px; background: #f5f7f6; box-shadow: 0 2px 10px rgba(0, 0, 0, .25); }
.brand { display: flex; align-items: center; gap: 12px; font-size: 32px; font-weight: 900; }
.brand span { padding-bottom: 6px; }
.flag { width: 48px; height: 32px; box-shadow: 0 1px 3px rgba(0, 0, 0, .15); }
.nav { display: flex; gap: 32px; font-size: 23px; font-weight: 700; }
.nav .current { color: #d32727; }

.live { display: grid; grid-template-columns: 2fr 1fr; gap: 32px; padding: 64px 143px 50px; border-bottom: 2px solid #d2d4d6; }
.map { position: relative; height: 800px; overflow: hidden; box-shadow: 0 4px 10px rgba(0, 0, 0, .2); font-family: Roboto, sans-serif; }
.map-column { min-width: 0; }
.map-canvas { width: 100%; height: 100%; }
.terrain path { vector-effect: non-scaling-stroke; }
.terrain { fill: none; stroke-linejoin: round; }
.green { fill: #b3dbbd; }
.urban { fill: #e0e1e6; }
.sand { fill: #e8e0cf; }
.white { fill: #f5f7f6; }
.water { fill: #97b8ef; }
.river { stroke: #97b8ef; stroke-width: 4px; }
.river-mid { stroke-width: 12px; }
.river-wide { stroke-width: 28px; }
.minor { stroke: #f5f7f6; stroke-width: 3px; }
.road-case { stroke: #f2b04a; stroke-width: 9px; }
.road-fill { stroke: #f7e3b5; stroke-width: 5px; }
.road-case.thin { stroke-width: 7px; }
.road-fill.thin { stroke-width: 4px; }
.border { stroke: #5f6368; stroke-width: 2px; }
.ferry { stroke: #6f9dec; stroke-width: 2px; stroke-dasharray: 12 6; }
.tile { stroke: #fff; stroke-opacity: .18; }
.labels { font-size: 27px; fill: #25282c; text-anchor: middle; stroke: #f5f7f6; stroke-width: 5px; stroke-linejoin: round; paint-order: stroke; }
.labels .start { text-anchor: start; }
.labels .city { font-size: 36px; font-weight: 500; }
.labels .capital { font-size: 58px; font-weight: 500; }
.island { font-style: italic; }
.district { font-size: 21px; fill: #55585d; font-weight: 500; }
.sea { fill: #3d70cf; stroke: none; text-anchor: start; }
.route { font-size: 22px; fill: #7d4a18; stroke-width: 4px; text-anchor: start; }
.shields { font-size: 20px; font-weight: 500; fill: #3b3320; text-anchor: middle; }
.accidents path { fill: none; marker: url(#dot); }

.map-type { position: absolute; top: 16px; left: 16px; display: flex; height: 64px; background: #f5f7f6; border-radius: 4px; box-shadow: 0 1px 4px rgba(0, 0, 0, .3); font-size: 29px; color: #565656; }
.map-type button { padding: 0 26px; }
.map-type button + button { border-left: 1px solid #dcdedd; }
.map-type .selected { color: #000; font-weight: 500; }
.map-tools { position: absolute; top: 16px; right: 16px; bottom: 38px; width: 64px; display: flex; flex-direction: column; gap: 50px; }
.tool, .zoomer { display: flex; align-items: center; justify-content: center; background: #f5f7f6; border-radius: 4px; box-shadow: 0 1px 4px rgba(0, 0, 0, .3); }
.tool { height: 64px; }
.tool svg { width: 28px; height: 28px; }
.fullscreen { margin-bottom: auto; }
.tool .pegman { width: 28px; height: 48px; }
.zoomer { flex-direction: column; }
.zoomer button { width: 48px; height: 65px; display: flex; align-items: center; justify-content: center; }
.zoomer button + button { border-top: 2px solid #dcdedd; }
.zoomer svg { width: 28px; height: 28px; }
.google { position: absolute; left: 15px; bottom: 4px; font-family: Lato, sans-serif; font-size: 30px; line-height: 36px; font-weight: 700; color: #f5f7f6; text-shadow: 0 0 3px #4a5878, 0 0 2px #4a5878; }
.attribution { position: absolute; right: 0; bottom: 0; display: flex; gap: 2px; font-size: 16px; line-height: 22px; }
.attribution > * { padding: 0 9px 0 8px; background: #d3dbec; }

.filters { display: flex; align-items: center; gap: 26px; padding-top: 13px; font-size: 22px; }
.range { display: flex; height: 47px; border: 2px solid #cccdd0; box-shadow: 0 1px 2px rgba(0, 0, 0, .1); }
.range button { padding: 0 25px; }
.range button + button { border-left: 2px solid #cccdd0; }
.range .selected { background: #d32727; color: #f5f7f6; }
.traffic { display: flex; align-items: center; gap: 6px; color: #4b5563; }
.traffic input { appearance: none; width: 26px; height: 26px; margin: 0; border: 2px solid #a0a4aa; border-radius: 10px; background: #f5f7f6; }

.feed h1 { font-size: 47px; line-height: 54px; font-weight: 900; color: #d32727; }
.feed p { color: #6b7280; line-height: 36px; padding-bottom: 25px; }
.feed table { width: 100%; border-collapse: collapse; background: #f5f7f6; color: #6b7280; box-shadow: 0 4px 10px rgba(0, 0, 0, .2); }
.feed tr { height: 58px; border-bottom: 2px solid #dcdfe1; }
.feed td { padding: 0 12px; }
.feed td:first-child { width: 143px; white-space: nowrap; }

.stats { display: grid; grid-template-columns: 1fr 5fr; gap: 32px; padding: 50px 143px 67px; }
.card { background: #f3f3f3; border-radius: 10px; padding: 32px 32px 59px; box-shadow: 0 12px 32px rgba(0, 0, 0, .12), 0 4px 10px rgba(0, 0, 0, .08); min-width: 0; }
.counts h2 { font-size: 28px; line-height: 40px; font-weight: 900; }
.count { display: flex; flex-direction: column; padding-top: 56px; color: #6b7280; }
.count + .count { padding-top: 94px; }
.count strong { font-size: 76px; line-height: 74px; font-weight: 900; color: #000; }
.delta { display: flex; align-items: center; gap: 5px; padding-top: 2px; }
.delta svg { width: 14px; height: 12px; fill: currentColor; }
.down { color: #35a653; }
.up { color: #ec6363; }

.tabs { display: flex; width: max-content; height: 57px; border: 2px solid #dcdddf; font-size: 24px; }
.tabs button { padding: 0 25px; }
.tabs button + button + button { border-left: 1px solid #dcdddf; }
.tabs .selected { background: #dddee4; box-shadow: inset 0 -4px #d32727, 0 2px #d32727; padding-bottom: 6px; }
.toolbar { display: flex; justify-content: flex-end; align-items: center; padding: 3px 11px 0 0; fill: #6e8192; }
.toolbar button { width: 32px; height: 32px; display: flex; align-items: center; justify-content: center; }
.toolbar svg { width: 32px; height: 32px; }
.toolbar .round { width: 27px; height: 27px; }
.toolbar .zoom-select { margin-left: 5px; fill: #1e8ff0; }
.toolbar .pan { margin-left: 2px; }
.toolbar .home { margin-left: 7px; }
.toolbar .pan svg { width: 24px; height: 24px; overflow: visible; fill: #f8f8f8; stroke: #6e8192; stroke-width: 2px; }
.chart { width: 100%; height: auto; font-family: "Liberation Sans", Arial, sans-serif; font-size: 19px; fill: #373d3f; }
.grid, .axis { stroke: #dcdcdd; stroke-width: 2px; fill: none; }
.y-labels { text-anchor: end; }
.x-labels { text-anchor: middle; }
.series { fill: none; stroke: #dc4953; stroke-width: 8px; }
```
